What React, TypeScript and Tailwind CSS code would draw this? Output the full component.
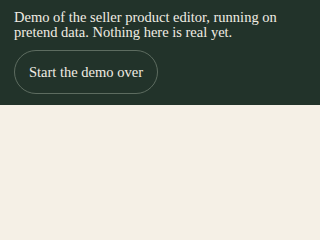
export default function App() {
  return (
    <div className="min-h-[240px] bg-[#f5f0e6] font-['Liberation_Serif',serif]">
      <div className="bg-[#22332a] px-[14px] pt-[10px] pb-[11px] text-[#f1ede4]">
        <p className="text-[14.5px] leading-[15px]">
          Demo of the seller product editor, running on pretend data. Nothing here is real yet.
        </p>
        <button className="mt-[10px] h-[44px] rounded-full border border-[#5d6c60] px-[14px] pt-[1px] text-[14.5px] text-[#f1ede4]">
          Start the demo over
        </button>
      </div>
    </div>
  );
}
